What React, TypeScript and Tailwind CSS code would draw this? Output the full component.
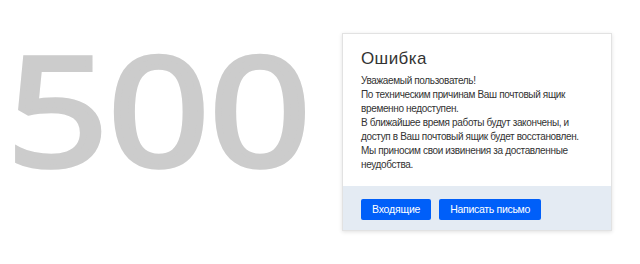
export default function App() {
  return (
    <div className="w-[640px] h-[264px] bg-white flex items-start overflow-hidden" style={{ fontFamily: '"Liberation Sans", Arial, sans-serif' }}>
      <div className="w-[342px] pt-[33px] pl-[7px]">
        <div
          className="text-[150px] leading-none font-normal text-[#cccccc] [-webkit-text-stroke:5.6px_#cccccc] origin-left scale-x-[1.18] whitespace-nowrap"
          style={{ fontFamily: '"Open Sans", sans-serif' }}
        >
          500
        </div>
      </div>
      <div className="mt-[33px] w-[270px] border border-[#e2e2e2] shadow-[0_1px_4px_rgba(0,0,0,0.12)] bg-white">
        <div className="px-[18px] pt-[14px] pb-[14px] text-[#333333]">
          <h1 className="text-[17px] leading-[22px] mb-[4px] tracking-[0.4px]">Ошибка</h1>
          <p className="text-[10px] leading-[14px] tracking-[-0.35px] whitespace-nowrap">
            Уважаемый пользователь!
            <br />
            По техническим причинам Ваш почтовый ящик
            <br />
            временно недоступен.
            <br />
            В ближайшее время работы будут закончены, и
            <br />
            доступ в Ваш почтовый ящик будет восстановлен.
            <br />
            Мы приносим свои извинения за доставленные
            <br />
            неудобства.
          </p>
        </div>
        <div className="bg-[#e4ebf3] px-[18px] pt-[13px] pb-[10px] flex gap-[8px]">
          <button className="h-[21px] px-[11px] bg-[#005ff9] text-white text-[10.5px] tracking-[-0.2px] rounded-[2px]">Входящие</button>
          <button className="h-[21px] px-[11px] bg-[#005ff9] text-white text-[10.5px] tracking-[-0.3px] rounded-[2px]">Написать письмо</button>
        </div>
      </div>
    </div>
  );
}
